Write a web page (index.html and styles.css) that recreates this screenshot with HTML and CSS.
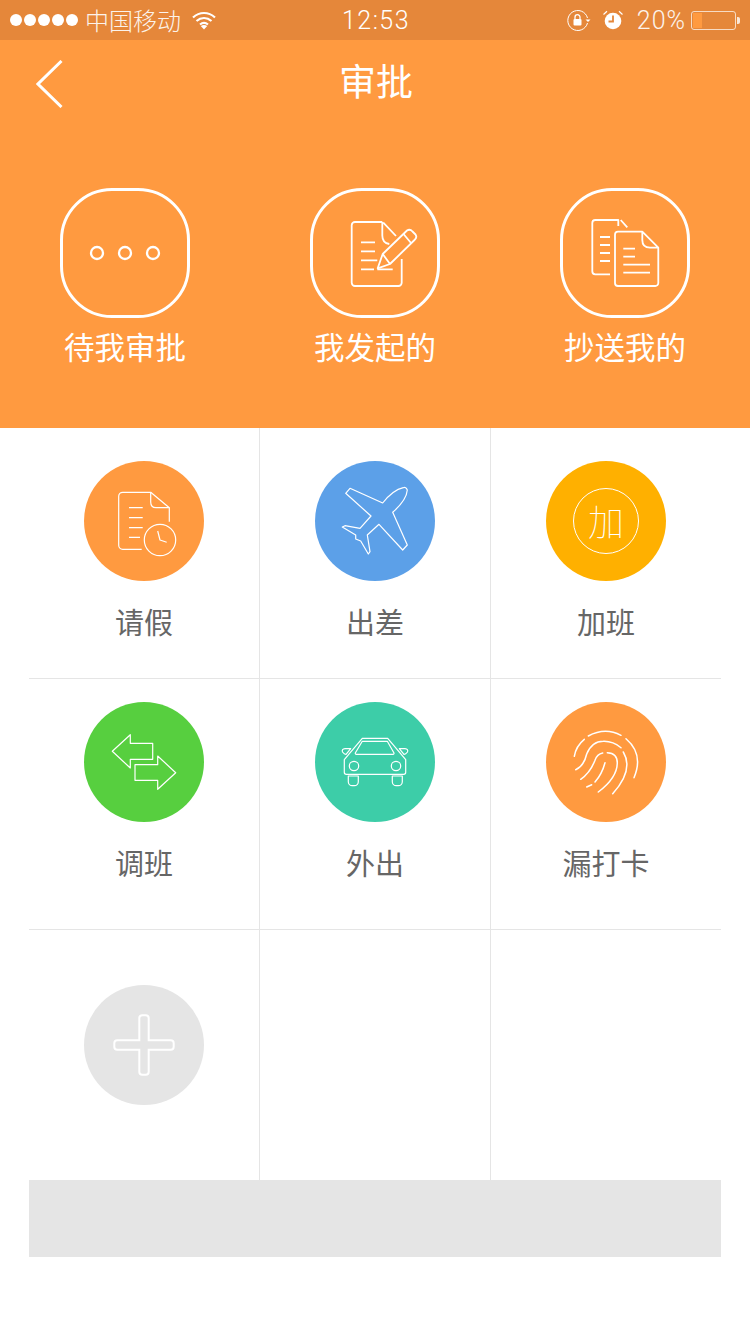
FILE: index.html
```html
<!DOCTYPE html>
<html lang="zh-CN">
<head>
<meta charset="utf-8">
<title>审批</title>
<link rel="stylesheet" href="styles.css">
</head>
<body>
<div class="status">
  <div class="status-left">
    <div class="signal"><i></i><i></i><i></i><i></i><i></i></div>
    <span class="carrier">中国移动</span>
    <svg class="wifi" width="26" height="20" viewBox="0 0 26 20"><path d="M2 7.500C8.500 1.500 17.500 1.500 24 7.500M5.500 11C10 7 16 7 20.500 11M9 14.500C11.500 12.500 14.500 12.500 17 14.500" fill="none" stroke="#fff" stroke-width="2.200"/><path d="M13 19.500L9.800 16Q13 14 16.200 16Z" fill="#fff"/></svg>
  </div>
  <div class="time">12:53</div>
  <div class="status-right">
    <svg class="lock" width="24" height="22" viewBox="0 0 24 22"><path d="M20.500 9A10 10 0 1 0 20.500 14" fill="none" stroke="#fff" stroke-width="1"/><path d="M18.500 10.500h5l-2.500 2.500z" fill="#fff"/><rect x="6.500" y="10" width="8" height="6.500" rx="1" fill="#fff"/><path d="M8 10V8.200a2.500 2.500 0 0 1 5 0V10" fill="none" stroke="#fff" stroke-width="1.300"/></svg>
    <svg class="alarm" width="22" height="20" viewBox="0 0 22 20"><circle cx="11" cy="11" r="8.300" fill="#fff"/><path d="M11 5.500V11.500H6.500" fill="none" stroke="#e5873a" stroke-width="1.800"/><path d="M1.500 4.500L5 1.300M20.500 4.500L17 1.300" fill="none" stroke="#fff" stroke-width="1.200"/></svg>
    <span class="percent">20%</span>
    <div class="battery"><div class="battery-level"></div></div>
  </div>
</div>

<header class="hero">
  <div class="nav">
    <svg class="back" width="27" height="48" viewBox="0 0 27 48"><path d="M25.500 1L2 24L25.500 47" fill="none" stroke="#fff" stroke-width="3"/></svg>
    <h1 class="title">审批</h1>
  </div>
  <div class="quick">
    <div class="quick-item">
      <div class="tile">
        <svg width="124" height="124" viewBox="3 3 124 124"><g class="line-dots"><circle cx="37" cy="65" r="6"/><circle cx="65" cy="65" r="6"/><circle cx="93" cy="65" r="6"/></g></svg>
      </div>
      <div class="quick-label">待我审批</div>
    </div>
    <div class="quick-item">
      <div class="tile">
        <svg width="124" height="124" viewBox="3 3 124 124"><g class="line-2"><path d="M72.300 34H45a3.300 3.300 0 0 0-3.300 3.300V94.700a3.300 3.300 0 0 0 3.300 3.300H88.400a3.300 3.300 0 0 0 3.300-3.300V71"/><path d="M72.300 34V47.500Q72.300 55 79.300 56M73.300 34.700L86 48"/><path d="M51 54.300H65M51 63.300H65M51 72.300H67.300M51 81.300H64M67.300 81.300H82.700"/><path d="M67.700 80.300L72.700 66L97 42.500Q100 40.500 102.500 43.500L105.500 46.500Q107.500 49.500 104.500 52L80 76Z"/><path d="M93.500 46L101 55M72.700 66L80 76"/></g></svg>
      </div>
      <div class="quick-label">我发起的</div>
    </div>
    <div class="quick-item">
      <div class="tile">
        <svg width="124" height="124" viewBox="3 3 124 124"><g class="line-2"><path d="M50 86.300H35.300a3 3 0 0 1-3-3V35a3 3 0 0 1 3-3H58.300V38M60.700 32L67.300 39.300"/><path d="M40 49H50M40 57H50M40 65H50M40 73H50"/><path d="M82.300 43.700H58a3 3 0 0 0-3 3V95a3 3 0 0 0 3 3H95.300a3 3 0 0 0 3-3V59.700L82.300 43.700V52Q82.300 59.700 90 59.700H98.300"/><path d="M63.300 60.700H75M63.300 68.700H75M63.300 76.700H90M63.300 84.700H90"/></g></svg>
      </div>
      <div class="quick-label">抄送我的</div>
    </div>
  </div>
</header>

<main class="grid">
  <div class="cell cell-first">
    <div class="disc disc-orange">
      <svg width="120" height="120" viewBox="0 0 120 120"><g class="line-1"><path d="M57.700 88.300H38.700a4 4 0 0 1-4-4V35.300a4 4 0 0 1 4-4H66.700L85.300 46.700V60.700"/><path d="M66.700 31.300V41Q66.700 46.700 72 46.700H85.300"/><path d="M45 46.700H58.700M45 56.700H58.700M45 66.700H58.700M45 76.300H56"/><circle cx="76" cy="79" r="15.700"/><path d="M73.700 70L76 79L82.700 81.300"/></g></svg>
    </div>
    <div class="cell-label">请假</div>
  </div>
  <div class="cell cell-first">
    <div class="disc disc-blue">
      <svg width="120" height="120" viewBox="0 0 120 120"><g class="line-1"><path d="M35 27.300L30.700 32.300L56 55L45 67.300L30 64.700L27.300 66L40.700 74V78L45.700 80L53.300 93L55 90.700L52.300 74L64 63.300L87.700 89L92.300 84L77.700 51.300Q91.500 39 92.300 29Q91 25.500 88.300 26.700Q78 29 67.700 42Z"/></g></svg>
    </div>
    <div class="cell-label">出差</div>
  </div>
  <div class="cell cell-first cell-end">
    <div class="disc disc-yellow"><span class="ring">加</span></div>
    <div class="cell-label">加班</div>
  </div>

  <div class="cell cell-second">
    <div class="disc disc-green">
      <svg width="120" height="120" viewBox="0 0 120 120"><g class="line-1"><path d="M28.300 49.300L46.300 32.700V41.300H68.700V57.300H46.300V66Z"/><path d="M51 62.700H73.700V54L91.700 70.700L73.700 87.300V78.300H51Z"/></g></svg>
    </div>
    <div class="cell-label">调班</div>
  </div>
  <div class="cell cell-second">
    <div class="disc disc-teal">
      <svg width="120" height="120" viewBox="0 0 120 120"><g class="line-1"><path d="M47.300 36.300H72.700L90.700 57.700V70.300a2 2 0 0 1-2 2H31.300a2 2 0 0 1-2-2V57.700Z"/><path d="M47.300 39.300H72.300L79 51a1 1 0 0 1-1 1.300H41.300a1 1 0 0 1-1-1.300Z"/><circle cx="39" cy="64" r="4.700"/><circle cx="81" cy="64" r="4.700"/><path d="M33.300 74V79.700a4 4 0 0 0 4 4H39.300a4 4 0 0 0 4-4V74ZM77.300 74V79.700a4 4 0 0 0 4 4H83.300a4 4 0 0 0 4-4V74Z"/><path d="M35.700 46.700H30Q26.500 47 27.500 50Q29.500 52.500 31 52.300ZM84.300 46.700H90Q93.500 47 92.500 50Q90.500 52.500 89 52.300Z"/></g></svg>
    </div>
    <div class="cell-label">外出</div>
  </div>
  <div class="cell cell-second cell-end">
    <div class="disc disc-orange">
      <svg width="120" height="120" viewBox="0 0 120 120"><g class="line-print"><path d="M42.300 34Q59 25 75 33.300"/><path d="M80 36.700Q98 52 88 75.700"/><path d="M38.300 37.300Q30 44 28.300 54.300"/><path d="M29.700 67.700Q38 64 40.700 52Q46 39.300 57.300 39.300Q67 39 75 45.700"/><path d="M77.300 50Q88 68 66.700 91.700"/><path d="M34.700 77.300Q44 71 49 58.300Q51 52 56.700 51"/><path d="M61.300 50.700Q71.300 51 71.300 61Q71 76 52.300 90"/><path d="M49 80Q56 72 59 60.700"/><path d="M40.700 85L45.700 82.700"/></g></svg>
    </div>
    <div class="cell-label">漏打卡</div>
  </div>

  <div class="cell cell-third">
    <div class="disc disc-grey">
      <svg width="120" height="120" viewBox="0 0 120 120"><g class="line-plus"><path d="M55.300 33.300a3 3 0 0 1 3-3h3.400a3 3 0 0 1 3 3V55.300H86.700a3 3 0 0 1 3 3V61.700a3 3 0 0 1-3 3H64.700V86.700a3 3 0 0 1-3 3H58.300a3 3 0 0 1-3-3V64.700H33.300a3 3 0 0 1-3-3V58.300a3 3 0 0 1 3-3H55.300Z"/></g></svg>
    </div>
  </div>
  <div class="cell cell-third"></div>
  <div class="cell cell-third cell-end"></div>
</main>
<div class="footer-bar"></div>
</body>
</html>
```
FILE: styles.css
```css
* { box-sizing: border-box; }
html, body { margin: 0; padding: 0; }
body {
  width: 750px;
  height: 1334px;
  overflow: hidden;
  background: #fff;
  font-family: "Noto Sans CJK SC", "Noto Sans", sans-serif;
}
.status {
  height: 40px;
  background: #e5873a;
  color: #fff;
  display: grid;
  grid-template-columns: 1fr auto 1fr;
  align-items: center;
  padding: 0 10px;
}
.status-left, .status-right { display: flex; align-items: center; }
.status-right { justify-content: flex-end; }
.signal { display: flex; gap: 2px; }
.signal i { width: 12px; height: 12px; border-radius: 50%; background: #fff; }
.carrier { margin-left: 7px; font-size: 24px; font-weight: 300; line-height: 40px; opacity: .9; }
.wifi { margin-left: 10px; }
.time { font-family: Roboto, sans-serif; font-weight: 300; font-size: 25px; letter-spacing: 1.5px; line-height: 42px; height: 40px; padding-left: 2px; }
.lock { margin-right: 11px; margin-left: 1px; }
.alarm { margin-right: 13px; }
.percent { font-family: Roboto, sans-serif; font-weight: 300; font-size: 25px; letter-spacing: 1px; margin-right: 5px; line-height: 42px; height: 40px; opacity: .9; }
.battery {
  position: relative;
  width: 45px;
  height: 19px;
  border: 1px solid rgba(255, 255, 255, .7);
  border-radius: 3px;
  padding: 1px;
  margin-right: 4px;
}
.battery::after {
  content: "";
  position: absolute;
  right: -5px;
  top: 5px;
  width: 3px;
  height: 7px;
  background: rgba(255, 255, 255, .8);
  border-radius: 0 2px 2px 0;
}
.battery-level { width: 9px; height: 15px; background: #ff9a40; }

.hero { height: 388px; background: #ff9a40; color: #fff; }
.nav {
  height: 88px;
  padding: 0 0 8px 2px;
  position: relative;
  display: flex;
  align-items: center;
  justify-content: center;
}
.back { position: absolute; left: 36px; top: 20px; }
.title { margin: 0; font-size: 37px; font-weight: 400; line-height: 80px; }
.quick { display: flex; justify-content: space-between; padding: 60px 60px 0; }
.quick-item { width: 130px; display: flex; flex-direction: column; align-items: center; }
.tile {
  width: 130px;
  height: 130px;
  border: 3px solid #fff;
  border-radius: 52px;
  display: flex;
  align-items: center;
  justify-content: center;
}
.tile svg { display: block; }
.quick-label { margin-top: 7px; font-size: 30.5px; line-height: 42px; white-space: nowrap; }
.line-2 { fill: none; stroke: #fff; stroke-width: 1.8; stroke-linejoin: round; }
.line-dots { fill: none; stroke: #fff; stroke-width: 2.3; }

.grid {
  margin: 0 29px;
  width: 692px;
  display: grid;
  grid-template-columns: 231px 231px 230px;
  grid-template-rows: 251px 251px 250px;
}
.cell {
  border-right: 1px solid #e5e5e5;
  border-bottom: 1px solid #e5e5e5;
  display: flex;
  flex-direction: column;
  align-items: center;
}
.cell-end { border-right: 0; }
.cell-first { padding-top: 33px; }
.cell-second { padding-top: 23px; }
.cell-third { padding-top: 55px; border-bottom: 0; }
.disc {
  width: 120px;
  height: 120px;
  border-radius: 50%;
  flex: none;
  display: flex;
  align-items: center;
  justify-content: center;
}
.disc svg { display: block; }
.disc-orange { background: #ff9a40; }
.disc-blue { background: #5ca0e8; }
.disc-yellow { background: #ffb000; }
.disc-green { background: #57cf3f; }
.disc-teal { background: #3dcda8; }
.disc-grey { background: #e5e5e5; }
.ring {
  width: 66px;
  height: 66px;
  border: 1px solid #fff;
  border-radius: 50%;
  color: #fff;
  font-size: 36px;
  font-weight: 100;
  line-height: 62px;
  text-align: center;
}
.cell-label { margin-top: 20px; font-size: 29px; line-height: 40px; color: #666; white-space: nowrap; }
.line-1 { fill: none; stroke: #fff; stroke-width: 1.2; stroke-linejoin: round; }
.line-print { fill: none; stroke: #fff; stroke-width: 1.5; stroke-linecap: round; }
.line-plus { fill: none; stroke: #fff; stroke-width: 2; }
.footer-bar { margin: 0 29px; width: 692px; height: 77px; background: #e5e5e5; }
```
